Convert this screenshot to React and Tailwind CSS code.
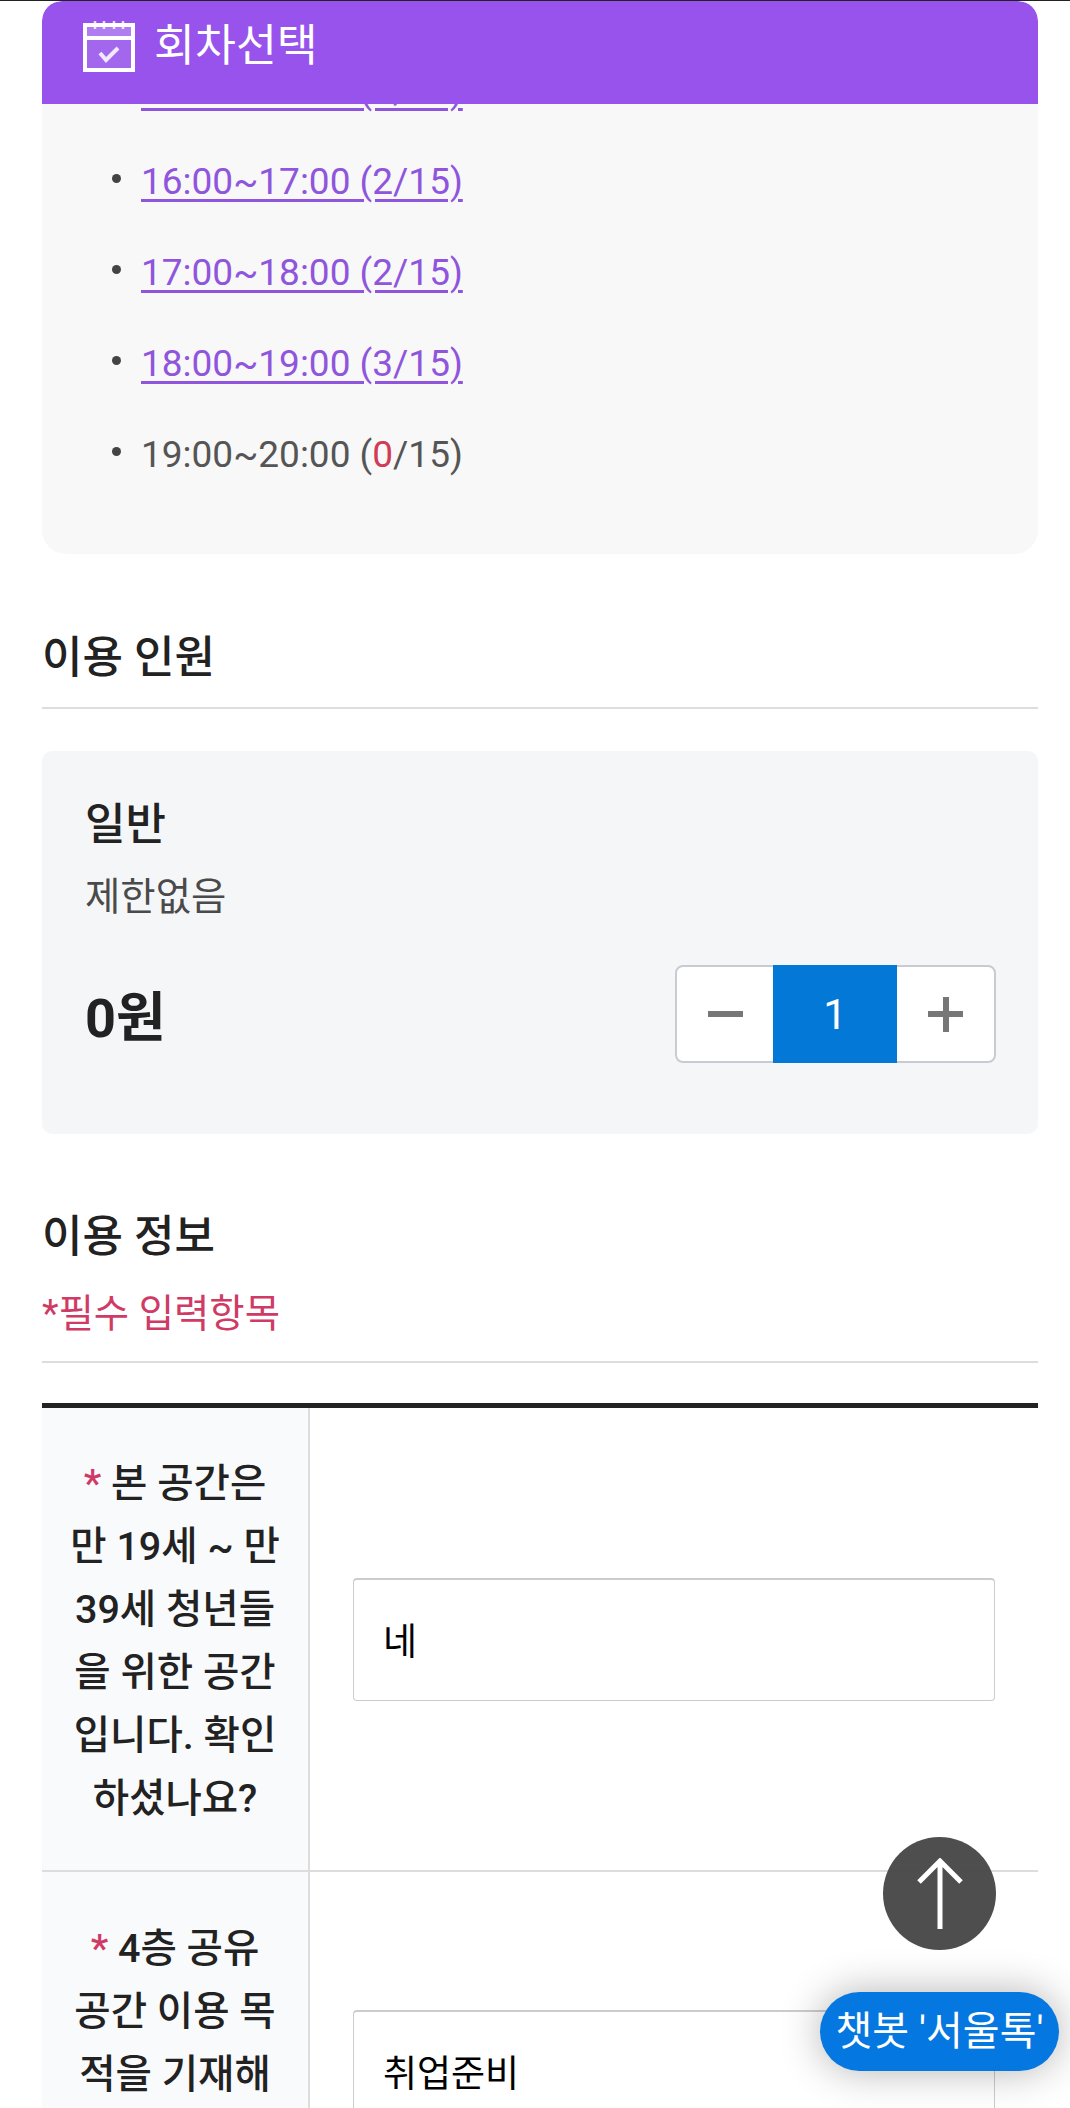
const fontStack = '[font-family:Roboto,"Noto_Sans_CJK_KR",sans-serif]'

function CalendarIcon() {
  return (
    <svg width="52" height="52" viewBox="0 0 52 52" fill="none" className="shrink-0">
      <rect x="2" y="5" width="48" height="45" stroke="white" strokeWidth="4" />
      <path d="M3 18H49" stroke="white" strokeWidth="4" />
      <path d="M12 1V9M21 1V9M31 1V9M40 1V9" stroke="white" strokeOpacity="0.8" strokeWidth="2.5" />
      <rect x="4" y="7" width="44" height="9" fill="white" fillOpacity="0.25" />
      <rect x="4" y="20" width="44" height="28" fill="white" fillOpacity="0.12" />
      <path d="M17 33L23 40L35 28" stroke="white" strokeOpacity="0.85" strokeWidth="4" />
    </svg>
  )
}

function SlotLink({ children }) {
  return (
    <li className="h-[91px] flex items-start">
      <span className="mt-[38px] mr-[20px] w-[9px] h-[9px] rounded-full bg-[#444]" />
      <a className="text-[37px] leading-[91px] text-[#9055dd] underline decoration-[3px] underline-offset-[5px]">
        {children}
      </a>
    </li>
  )
}

function SectionTitle({ children }) {
  return <h2 className="text-[44px] leading-[60px] font-medium text-[#222]">{children}</h2>
}

function Stepper() {
  return (
    <div className="flex w-[321px] h-[98px] rounded-lg border-2 border-[#c8ccd2] bg-white">
      <div className="w-[96px] flex items-center justify-center">
        <span className="w-[35px] h-[6px] bg-[#777]" />
      </div>
      <div className="-my-0.5 w-[124px] bg-[#0478d6] flex items-center justify-center text-[42px] text-white">1</div>
      <div className="relative flex-1 flex items-center justify-center">
        <span className="w-[35px] h-[6px] bg-[#777]" />
        <span className="absolute w-[6px] h-[35px] bg-[#777]" />
      </div>
    </div>
  )
}

function FormRow({ rowClass, thClass, label, value }) {
  return (
    <div className={`flex ${rowClass}`}>
      <div className={`w-[268px] shrink-0 bg-[#f9fafc] border-r-2 border-[#ddd] px-[25px] text-center text-[39.5px] leading-[63px] font-medium text-[#222] ${thClass}`}>
        <span className="text-[#d03b66]">* </span>
        {label}
      </div>
      <div className="flex-1 flex items-center pl-[43px] pr-[43px]">
        <div className="w-full h-[123px] border border-t-2 border-[#ccc] rounded flex items-center pl-[29px] pr-4 pt-[7px] text-[37px] text-black">
          {value}
        </div>
      </div>
    </div>
  )
}

export default function App() {
  return (
    <div className={`relative h-[2108px] w-[1070px] overflow-hidden bg-white ${fontStack}`}>
      <div className="h-px bg-[#222]" />
      <main className="ml-[42px] w-[996px]">
        <section className="bg-[#f8f8f8] rounded-b-[24px] rounded-t-[20px] h-[553px] overflow-hidden">
          <header className="relative z-10 h-[103px] bg-[#9753ec] rounded-t-[20px] flex items-center pl-[41px] pb-[13px] gap-[19px]">
            <CalendarIcon />
            <h1 className="text-[44.5px] text-white">회차선택</h1>
          </header>
          <ul className="-mt-[59px] pl-[70px]">
            <SlotLink>15:00~16:00 (2/15)</SlotLink>
            <SlotLink>16:00~17:00 (2/15)</SlotLink>
            <SlotLink>17:00~18:00 (2/15)</SlotLink>
            <SlotLink>18:00~19:00 (3/15)</SlotLink>
            <li className="h-[91px] flex items-start">
              <span className="mt-[38px] mr-[20px] w-[9px] h-[9px] rounded-full bg-[#444]" />
              <span className="text-[37px] leading-[91px] text-[#555]">
                19:00~20:00 (<span className="text-[#d03b55]">0</span>/15)
              </span>
            </li>
          </ul>
        </section>

        <div className="mt-[74px] pb-[19px] border-b-2 border-[#ddd]">
          <SectionTitle>이용 인원</SectionTitle>
        </div>

        <section className="mt-[42px] h-[383px] rounded-[10px] bg-[#f5f6f8] pt-[44px] pl-[43px] pr-[42px]">
          <div className="text-[44px] leading-[60px] font-medium text-[#222]">일반</div>
          <div className="mt-[17px] text-[38.4px] leading-[50px] text-[#4a4a4a]">제한없음</div>
          <div className="mt-[43px] flex items-center justify-between">
            <strong className="pt-[10px] text-[54px] leading-[88px] font-bold text-[#222]">0원</strong>
            <Stepper />
          </div>
        </section>

        <div className="mt-[73px] border-b-2 border-[#ddd] pb-[17px]">
          <SectionTitle>이용 정보</SectionTitle>
          <p className="mt-[17px] text-[38.4px] leading-[60px] text-[#d03b66]">*필수 입력항목</p>
        </div>

        <section className="mt-[40px] border-t-[5px] border-[#222]">
          <FormRow
            rowClass="h-[464px] border-b-2 border-[#ddd]"
            thClass="pt-[44px]"
            label="본 공간은 만 19세 ~ 만 39세 청년들을 위한 공간입니다. 확인하셨나요?"
            value="네"
          />
          <FormRow
            rowClass="h-[398px]"
            thClass="pt-[45px]"
            label={<>4층 공유<br />공간 이용 목<br />적을 기재해<br />주세요.</>}
            value="취업준비"
          />
        </section>
      </main>

      <button className="absolute left-[883px] top-[1837px] w-[113px] h-[113px] rounded-full bg-[#444]/95 flex items-center justify-center">
        <svg width="46" height="72" viewBox="0 0 46 72" fill="none">
          <path d="M23 2V71M2 24L23 3L44 24" stroke="white" strokeWidth="5" />
        </svg>
      </button>
      <button className="absolute left-[820px] top-[1992px] w-[239px] h-[79px] rounded-full bg-[#0478e0] text-[40px] text-white whitespace-nowrap shadow-[0_0_40px_rgba(0,0,0,0.3)]">
        챗봇 '서울톡'
      </button>
    </div>
  )
}
